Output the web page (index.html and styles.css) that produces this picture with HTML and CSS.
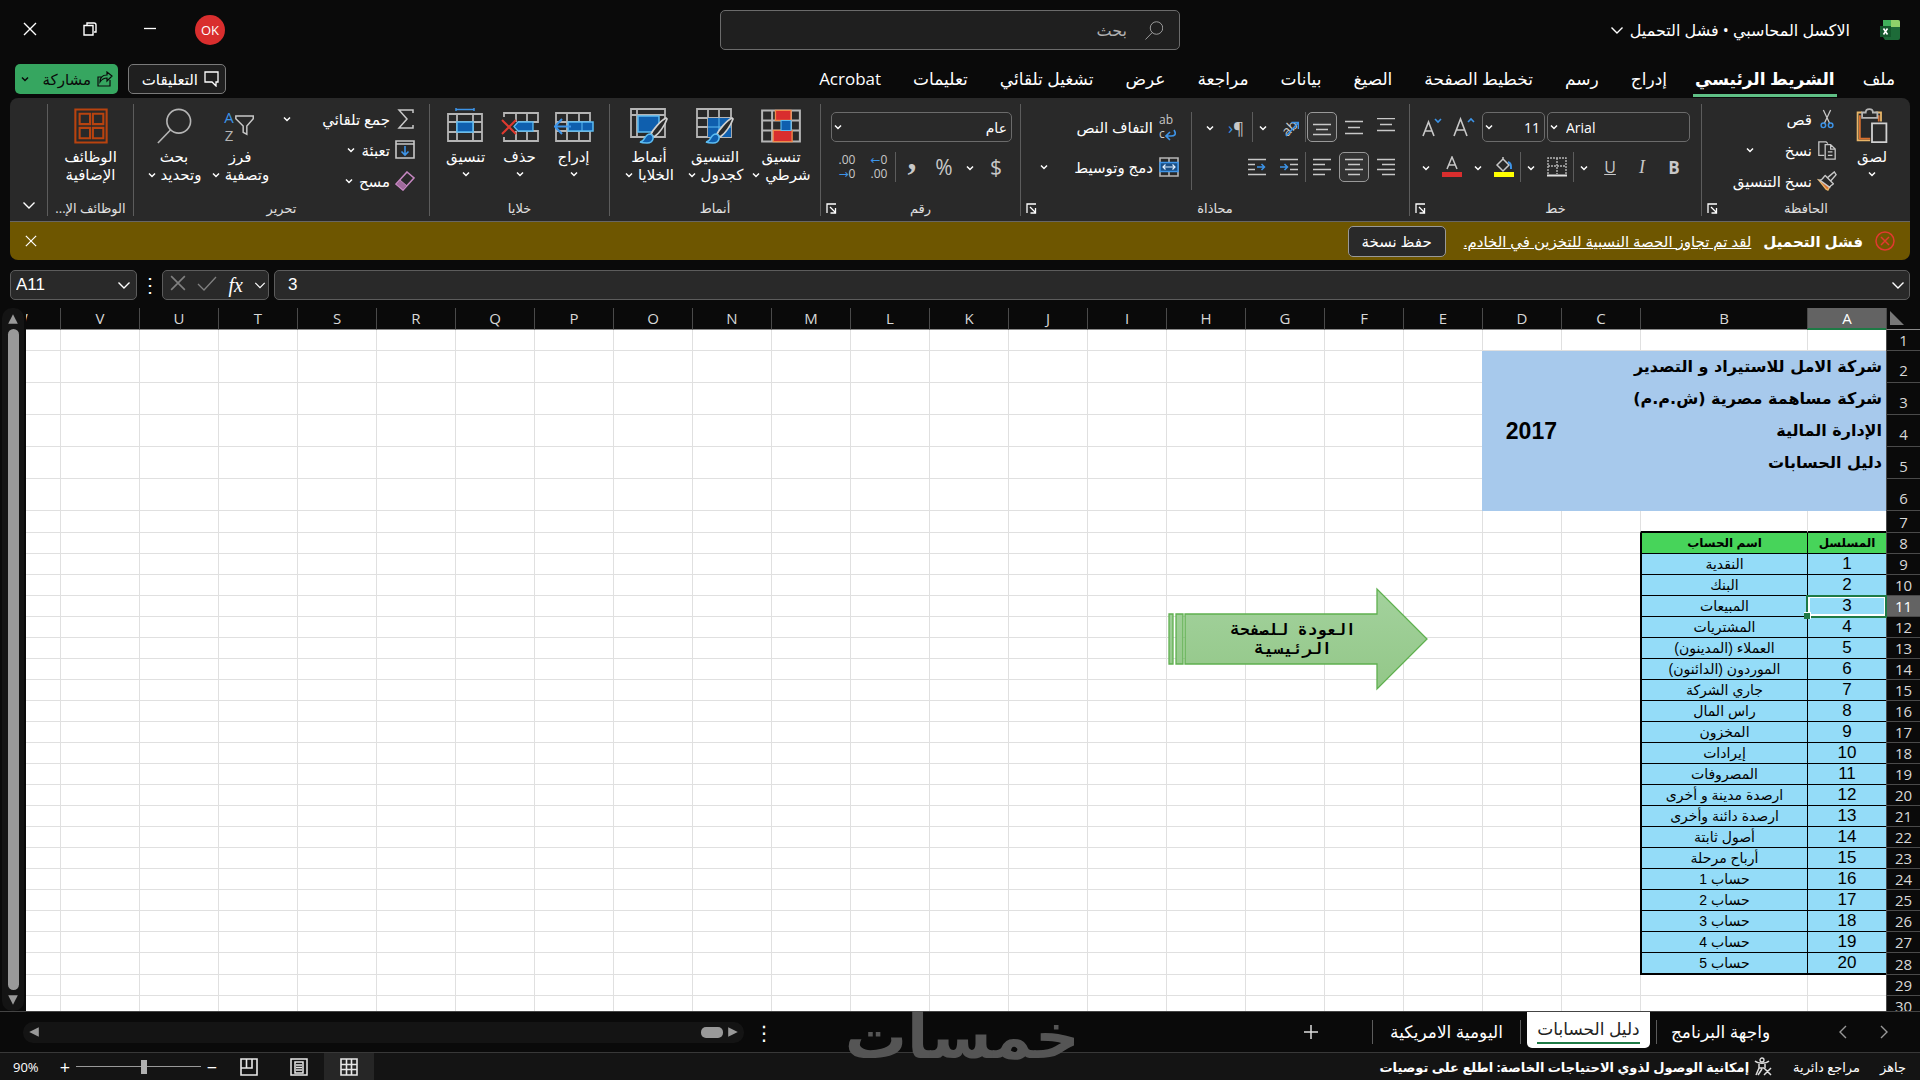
FILE: index.html
```html
<!DOCTYPE html>
<html lang="ar" dir="rtl">

<head>
    <meta charset="UTF-8">
    <meta name="viewport" content="width=device-width, initial-scale=1.0">
    <title>الاكسل المحاسبي</title>
    <link rel="stylesheet" href="styles.css">
</head>

<body>
    <!-- icon set -->
    <svg class="sprite" aria-hidden="true">
        <symbol id="chev" viewBox="0 0 10 10"><path d="M2 3.5l3 3 3-3" fill="none" stroke="currentColor" stroke-width="1.5"/></symbol>
        <symbol id="chev-big" viewBox="0 0 14 14"><path d="M1.500 4.500l5.500 5.500 5.500-5.500" fill="none" stroke="currentColor" stroke-width="1.400"/></symbol>
        <symbol id="close" viewBox="0 0 14 14"><path d="M1 1l12 12M13 1L1 13" fill="none" stroke="currentColor" stroke-width="1.400"/></symbol>
        <symbol id="lens" viewBox="0 0 36 38"><circle cx="23" cy="14" r="12.500" fill="none" stroke="currentColor" stroke-width="1.700"/><path d="M14.500 23L1 37" stroke="currentColor" stroke-width="1.700"/></symbol>
        <symbol id="launch" viewBox="0 0 11 11"><path d="M1 10V1h9M4 4l5.500 5.500M9.500 5v5h-5" fill="none" stroke="currentColor" stroke-width="1.300"/></symbol>
        <symbol id="paste" viewBox="0 0 36 40">
            <path d="M7 5H2v31h14M22 5h6v10" fill="none" stroke="#e8b568" stroke-width="2"/>
            <path d="M4.500 8v26H16M25.500 8v7" fill="none" stroke="#d9702f" stroke-width="2"/>
            <path d="M7 11V5h4c0-5 8-5 8 0h5v6z" fill="#292929" stroke="#b5b5b5" stroke-width="2"/>
            <path d="M18 17h16v21H18z" fill="#292929" stroke="#d0d0d0" stroke-width="2"/>
        </symbol>
        <symbol id="cut" viewBox="0 0 20 22">
            <path d="M6 1l7 15M14 1L7 16" fill="none" stroke="#c8c8c8" stroke-width="1.400"/>
            <circle cx="6" cy="18" r="2.500" fill="none" stroke="#3d94e8" stroke-width="1.600"/><circle cx="14" cy="18" r="2.500" fill="none" stroke="#3d94e8" stroke-width="1.600"/>
        </symbol>
        <symbol id="copy" viewBox="0 0 22 22">
            <path d="M8 17H2V2h8l2 2" fill="none" stroke="#c8c8c8" stroke-width="1.400"/>
            <path d="M9 5h6l5 5v11H9zM15 5v5h5M12 13h5M12 17h5" fill="none" stroke="#c8c8c8" stroke-width="1.400"/>
        </symbol>
        <symbol id="brush" viewBox="0 0 22 22">
            <path d="M2 10l8 10 2 1 3-6z" fill="#d9702f" stroke="#e8b568" stroke-width="1.500"/>
            <path d="M3 10c4 0 5-5 6-5l9 9c0 1-3 1-4 4zM12 7l7-6 2 3-6 7" fill="#292929" stroke="#c8c8c8" stroke-width="1.500"/>
        </symbol>
        <symbol id="font-up" viewBox="0 0 24 24"><path d="M2 21L8.500 4 15 21M4.500 15h8" fill="none" stroke="#c8c8c8" stroke-width="1.600"/><path d="M16 7l3-3 3 3" fill="none" stroke="#3d94e8" stroke-width="1.600"/></symbol>
        <symbol id="font-down" viewBox="0 0 24 24"><path d="M3 21L8.500 7 14 21M5 16h7" fill="none" stroke="#c8c8c8" stroke-width="1.600"/><path d="M15 4l3 3 3-3" fill="none" stroke="#3d94e8" stroke-width="1.600"/></symbol>
        <symbol id="borders" viewBox="0 0 20 20"><path d="M1 17V1h18v16M10 1v16M1 9h18" fill="none" stroke="#b5b5b5" stroke-width="1.400" stroke-dasharray="2 1"/><path d="M0 18.500h20" stroke="#e0e0e0" stroke-width="2"/></symbol>
        <symbol id="fill-color" viewBox="0 0 20 22"><path d="M3 9l6-6 6 6-6 6zM9 3V1" fill="none" stroke="#c8c8c8" stroke-width="1.500"/><path d="M14 6c3 1 3 3 3 7" fill="none" stroke="#3d94e8" stroke-width="2"/><path d="M0 16h20v5H0z" fill="#ffff00"/></symbol>
        <symbol id="font-color" viewBox="0 0 20 22"><path d="M5 13L10 1l5 12M7 9h6" fill="none" stroke="#c8c8c8" stroke-width="1.500"/><path d="M0 16h20v5H0z" fill="#d92e2e"/></symbol>
        <symbol id="v-top" viewBox="0 0 18 18"><path d="M0 .5h18M3 6.500h12M0 12.500h18" stroke="#c8c8c8" stroke-width="1.500"/></symbol>
        <symbol id="v-mid" viewBox="0 0 18 18"><path d="M0 3.500h18M3 9.500h12M0 15.500h18" stroke="#c8c8c8" stroke-width="1.500"/></symbol>
        <symbol id="v-bot" viewBox="0 0 18 18"><path d="M0 6.500h18M3 11.500h12M0 16.500h18" stroke="#c8c8c8" stroke-width="1.500"/></symbol>
        <symbol id="h-right" viewBox="0 0 18 18"><path d="M0 1.500h18M5 6.500h13M0 11.500h18M5 16.500h13" stroke="#c8c8c8" stroke-width="1.500"/></symbol>
        <symbol id="h-center" viewBox="0 0 18 18"><path d="M0 1.500h18M3 6.500h12M0 11.500h18M3 16.500h12" stroke="#c8c8c8" stroke-width="1.500"/></symbol>
        <symbol id="h-left" viewBox="0 0 18 18"><path d="M0 1.500h18M0 6.500h12M0 11.500h18M0 16.500h12" stroke="#c8c8c8" stroke-width="1.500"/></symbol>
        <symbol id="indent-l" viewBox="0 0 18 18"><path d="M0 1.500h18M10 6.500h8M10 11.500h8M0 16.500h18" stroke="#c8c8c8" stroke-width="1.500"/><path d="M0 9h7M4.500 6L7.500 9l-3 3" fill="none" stroke="#3d94e8" stroke-width="1.500"/></symbol>
        <symbol id="indent-r" viewBox="0 0 18 18"><path d="M0 1.500h18M0 6.500h7M0 11.500h7M0 16.500h18" stroke="#c8c8c8" stroke-width="1.500"/><path d="M9 9h7M13.500 6l3 3-3 3" fill="none" stroke="#3d94e8" stroke-width="1.500"/></symbol>
        <symbol id="arrow-ne" viewBox="0 0 20 20"><path d="M7 19L19 6M12.500 5.500H19.500V12" fill="none" stroke="#3d94e8" stroke-width="1.600"/></symbol>
        <symbol id="wrap-arrow" viewBox="0 0 12 12"><path d="M9 1c3 5 0 6-3 6H1M5 3L1 7l4 4" fill="none" stroke="#3d94e8" stroke-width="1.600"/></symbol>
        <symbol id="merge" viewBox="0 0 20 20"><path d="M1 1h18v18H1zM10 1v18" fill="none" stroke="#b5b5b5" stroke-width="1.600"/><path d="M1 5.500h18v9H1z" fill="#1b4f85" stroke="#3d94e8" stroke-width="1.500"/><path d="M4 10h12M6.500 7.500L4 10l2.500 2.500M13.500 7.500L16 10l-2.500 2.500" fill="none" stroke="#e0f0ff" stroke-width="1.200"/></symbol>
        <symbol id="cond" viewBox="0 0 36 30"><path d="M1 1h34v28H1zM1 10h34M1 19h34M10 1v28M27 1v28" fill="none" stroke="#b5b5b5" stroke-width="1.800"/><path d="M13 1h14v9H13zM11 19h17v10H11z" fill="#d92e2e" stroke="#f08a4a" stroke-width="1.200"/><path d="M18 10h9v9h-9z" fill="#0f5fae" stroke="#5cbcf2"/></symbol>
        <symbol id="tbl" viewBox="0 0 38 36"><path d="M1 1h34v28H1zM1 10h34M1 19h34M12 1v28M23 1v28" fill="none" stroke="#b5b5b5" stroke-width="1.800"/><path d="M12 10h23v19H12z" fill="#0f5fae"/><path d="M12 19h23M23 10v19" stroke="#5cbcf2"/><use href="#paint"/></symbol>
        <symbol id="cellst" viewBox="0 0 38 36"><path d="M1 1h34v28H1zM1 7h34M7 1v28" fill="none" stroke="#b5b5b5" stroke-width="1.800"/><path d="M8 8h21v16H8z" fill="#0f5fae" stroke="#5cbcf2" stroke-width="1.500"/><use href="#paint"/></symbol>
        <g id="paint"><path d="M36 10c-6 3-13 12-15 16l3 3c5-3 11-12 13-18z" fill="#292929" stroke="#d0d0d0" stroke-width="1.700"/><path d="M10 34c5 0 4-8 10-8 5 1 4 9-3 9-3 0-5 0-7-1z" fill="#0f5fae" stroke="#5cbcf2" stroke-width="1.600"/></g>
        <symbol id="ins" viewBox="0 0 40 36"><path d="M2 5h34v28H2zM2 14h34M2 23h34M13 5v28M25 5v28" fill="none" stroke="#b5b5b5" stroke-width="1.800"/><path d="M14 14h25v9H14z" fill="#0f5fae" stroke="#5cbcf2" stroke-width="1.500"/><path d="M28 14v9" stroke="#5cbcf2"/><path d="M17 18.500H1M8 11L1 18.500 8 26" fill="none" stroke="#3d94e8" stroke-width="2"/></symbol>
        <symbol id="del" viewBox="0 0 40 36"><path d="M4 9V5h34v9H18M4 29v4h34V23H18M16 5v9M27 5v9M16 23v10M27 23v10" fill="none" stroke="#b5b5b5" stroke-width="1.800"/><path d="M14 18.500l4-4.500h15v9H18z" fill="#0f5fae" stroke="#5cbcf2" stroke-width="1.300"/><path d="M2 12l14 14M16 12L2 26" stroke="#e03a2f" stroke-width="2"/></symbol>
        <symbol id="fmt" viewBox="0 0 40 36"><path d="M2 6h34v27H2zM2 14h34M2 24h34M11 6v27M27 6v27" fill="none" stroke="#b5b5b5" stroke-width="1.800"/><path d="M11 14h16v10H11z" fill="#0f5fae" stroke="#5cbcf2" stroke-width="1.500"/><path d="M10 1.500h18M10 0v3M28 0v3" stroke="#3d94e8" stroke-width="1.500"/></symbol>
        <symbol id="sigma" viewBox="0 0 20 20"><path d="M18 4V1H4l8 9-8 9h14v-3" fill="none" stroke="#c8c8c8" stroke-width="1.500"/></symbol>
        <symbol id="fill-down" viewBox="0 0 20 20"><path d="M1 1h18v17H1zM1 4h18" fill="none" stroke="#c8c8c8" stroke-width="1.600"/><path d="M10 6v9M6.500 11.500L10 15l3.500-3.500" fill="none" stroke="#3d94e8" stroke-width="1.600"/></symbol>
        <symbol id="eraser" viewBox="0 0 20 20"><path d="M12 1l7 6-11 12-7-6z" fill="none" stroke="#c586c0" stroke-width="1.600"/><path d="M5 9l7 6-4 4-7-6z" fill="#a06a9c" stroke="#c586c0"/></symbol>
        <symbol id="funnel" viewBox="0 0 22 24"><path d="M1 1h19v3l-7 8v9l-4-2v-7L1 4z" fill="none" stroke="#c8c8c8" stroke-width="1.600"/></symbol>
        <symbol id="addins" viewBox="0 0 36 38"><path d="M1.500 1.500h33v35h-33zM6 6h11v11H6zM20 6h11v11H20zM6 21h11v11H6zM20 21h11v11H20z" fill="none" stroke="#b8430f" stroke-width="2.200"/></symbol>
        <symbol id="comment" viewBox="0 0 16 16"><path d="M1 1h13v10h-2v4l-4-4H1z" fill="none" stroke="currentColor" stroke-width="1.300"/></symbol>
        <symbol id="share" viewBox="0 0 16 16"><path d="M4 6H1v9h12V9M3 11c0-5 3-7 7-7V1l5 4-5 5V7c-3 0-5 1-7 4z" fill="none" stroke="currentColor" stroke-width="1.200"/></symbol>
        <symbol id="excel" viewBox="0 0 20 20"><path d="M3 0h15a2 2 0 0 1 2 2v16a2 2 0 0 1-2 2H5l-2-3z" fill="#1d6b38"/><path d="M3 0h8v7H3z" fill="#3fb05a"/><path d="M11 0h7a2 2 0 0 1 2 2v5h-9z" fill="#8fd36a"/><path d="M0 6h11v11H0z" fill="#14582c"/><path d="M3.500 8.500l4 6M7.500 8.500l-4 6" stroke="#fff" stroke-width="1.600"/></symbol>
        <symbol id="error" viewBox="0 0 20 20"><circle cx="10" cy="10" r="9" fill="none" stroke="#e03a2f" stroke-width="1.500"/><path d="M6 6l8 8M14 6l-8 8" stroke="#e03a2f" stroke-width="1.500"/></symbol>
        <symbol id="access" viewBox="0 0 20 20"><circle cx="9" cy="3" r="2" fill="none" stroke="#ddd" stroke-width="1.300"/><path d="M2 4c3 3 11 3 14 0M6 7v4l-3 7M12 7v4M6 11h5M9 12l-4 6M11 11l7 7M18 11l-7 7" fill="none" stroke="#ddd" stroke-width="1.500"/></symbol>
    </svg>

    <header class="titlebar">
        <div class="doc">
            <svg class="logo"><use href="#excel"/></svg>
            <button class="doc-name">الاكسل المحاسبي • فشل التحميل <svg class="i14"><use href="#chev-big"/></svg></button>
        </div>
        <label class="search">
            <svg class="search-icon"><use href="#lens"/></svg>
            <input type="text" placeholder="بحث" aria-label="بحث">
        </label>
        <div class="window-btns">
            <button class="avatar">OK</button>
            <button class="win" aria-label="تصغير"><svg class="i14" viewBox="0 0 14 14"><path d="M1 6.500h12" stroke="#fff" stroke-width="1.300"/></svg></button>
            <button class="win" aria-label="استعادة"><svg class="i14" viewBox="0 0 14 14"><path d="M1 3.500h9v9.500H1zM4 3V1h7q2 0 2 2v7h-2" fill="none" stroke="#fff" stroke-width="1.400"/></svg></button>
            <button class="win" aria-label="إغلاق"><svg class="i14"><use href="#close"/></svg></button>
        </div>
    </header>

    <nav class="tabs">
        <a href="#">ملف</a>
        <a href="#" class="active">الشريط الرئيسي</a>
        <a href="#">إدراج</a>
        <a href="#">رسم</a>
        <a href="#">تخطيط الصفحة</a>
        <a href="#">الصيغ</a>
        <a href="#">بيانات</a>
        <a href="#">مراجعة</a>
        <a href="#">عرض</a>
        <a href="#">تشغيل تلقائي</a>
        <a href="#">تعليمات</a>
        <a href="#">Acrobat</a>
        <div class="tab-actions">
            <button class="comments"><svg class="i16"><use href="#comment"/></svg>التعليقات</button>
            <button class="share"><svg class="i16"><use href="#share"/></svg>مشاركة<svg class="i10"><use href="#chev"/></svg></button>
        </div>
    </nav>

    <section class="ribbon">
        <div class="group">
            <div class="group-body clip">
                <button class="big"><svg><use href="#paste"/></svg><span>لصق</span><svg class="i10"><use href="#chev"/></svg></button>
                <div class="list">
                    <button><svg class="i20"><use href="#cut"/></svg>قص</button>
                    <button><svg class="i20"><use href="#copy"/></svg><span class="grow">نسخ</span><svg class="i10"><use href="#chev"/></svg></button>
                    <button><svg class="i20"><use href="#brush"/></svg>نسخ التنسيق</button>
                </div>
            </div>
            <div class="group-name">الحافظة<svg class="launch"><use href="#launch"/></svg></div>
        </div>
        <div class="group">
            <div class="group-body rows font-group">
                <div class="row gap2">
                    <div class="combo font-name"><select aria-label="الخط"><option>Arial</option></select><svg class="i10"><use href="#chev"/></svg></div>
                    <div class="combo font-size"><select aria-label="حجم الخط"><option>11</option></select><svg class="i10"><use href="#chev"/></svg></div>
                    <div class="row">
                        <button class="tool"><svg class="i24"><use href="#font-up"/></svg></button>
                        <button class="tool"><svg class="i24"><use href="#font-down"/></svg></button>
                    </div>
                </div>
                <div class="row">
                    <button class="tool bold">B</button>
                    <button class="tool italic">I</button>
                    <button class="tool underline">U</button>
                    <button class="drop"><svg class="i10"><use href="#chev"/></svg></button>
                    <i class="sep"></i>
                    <button class="tool"><svg class="i20"><use href="#borders"/></svg></button>
                    <button class="drop"><svg class="i10"><use href="#chev"/></svg></button>
                    <i class="sep"></i>
                    <button class="tool"><svg class="i22"><use href="#fill-color"/></svg></button>
                    <button class="drop"><svg class="i10"><use href="#chev"/></svg></button>
                    <button class="tool"><svg class="i22"><use href="#font-color"/></svg></button>
                    <button class="drop"><svg class="i10"><use href="#chev"/></svg></button>
                </div>
            </div>
            <div class="group-name">خط<svg class="launch"><use href="#launch"/></svg></div>
        </div>
        <div class="group">
            <div class="group-body align">
                <div class="rows">
                    <div class="row">
                        <button class="tool"><svg class="i18"><use href="#v-top"/></svg></button>
                        <button class="tool"><svg class="i18"><use href="#v-mid"/></svg></button>
                        <button class="tool on"><svg class="i18"><use href="#v-bot"/></svg></button>
                        <i class="sep"></i>
                        <button class="tool orient"><span>ab</span><svg class="i20"><use href="#arrow-ne"/></svg></button>
                        <button class="drop"><svg class="i10"><use href="#chev"/></svg></button>
                        <i class="sep"></i>
                        <button class="tool rtl" dir="ltr"><b>›</b>¶</button>
                        <button class="drop"><svg class="i10"><use href="#chev"/></svg></button>
                    </div>
                    <div class="row">
                        <button class="tool"><svg class="i18"><use href="#h-right"/></svg></button>
                        <button class="tool on"><svg class="i18"><use href="#h-center"/></svg></button>
                        <button class="tool"><svg class="i18"><use href="#h-left"/></svg></button>
                        <i class="sep"></i>
                        <button class="tool"><svg class="i18"><use href="#indent-l"/></svg></button>
                        <button class="tool"><svg class="i18"><use href="#indent-r"/></svg></button>
                    </div>
                </div>
                <div class="rows wrap-col">
                    <button class="row wide"><span class="wrap-icon" dir="ltr">ab<br>c<svg class="i12"><use href="#wrap-arrow"/></svg></span>التفاف النص</button>
                    <button class="row wide"><svg class="i20"><use href="#merge"/></svg><span class="grow">دمج وتوسيط</span><svg class="i10"><use href="#chev"/></svg></button>
                </div>
            </div>
            <div class="group-name">محاذاة<svg class="launch"><use href="#launch"/></svg></div>
        </div>
        <div class="group">
            <div class="group-body rows num-group">
                <div class="combo num-format"><select aria-label="تنسيق الأرقام"><option>عام</option></select><svg class="i10"><use href="#chev"/></svg></div>
                <div class="row">
                    <button class="tool sign">$</button>
                    <button class="drop"><svg class="i10"><use href="#chev"/></svg></button>
                    <button class="tool sign">%</button>
                    <button class="tool comma">,</button>
                    <i class="sep"></i>
                    <button class="tool dec" dir="ltr"><span><b>←</b>0<br>.00</span></button>
                    <button class="tool dec" dir="ltr"><span>.00<br><b>→</b>0</span></button>
                </div>
            </div>
            <div class="group-name">رقم<svg class="launch"><use href="#launch"/></svg></div>
        </div>
        <div class="group">
            <div class="group-body bigs">
                <button class="big"><svg><use href="#cond"/></svg><span>تنسيق</span><span>شرطي <svg class="i10"><use href="#chev"/></svg></span></button>
                <button class="big"><svg><use href="#tbl"/></svg><span>التنسيق</span><span>كجدول <svg class="i10"><use href="#chev"/></svg></span></button>
                <button class="big"><svg><use href="#cellst"/></svg><span>أنماط</span><span>الخلايا <svg class="i10"><use href="#chev"/></svg></span></button>
            </div>
            <div class="group-name">أنماط</div>
        </div>
        <div class="group">
            <div class="group-body bigs cells">
                <button class="big"><svg><use href="#ins"/></svg><span>إدراج</span><svg class="i10"><use href="#chev"/></svg></button>
                <button class="big"><svg><use href="#del"/></svg><span>حذف</span><svg class="i10"><use href="#chev"/></svg></button>
                <button class="big"><svg><use href="#fmt"/></svg><span>تنسيق</span><svg class="i10"><use href="#chev"/></svg></button>
            </div>
            <div class="group-name">خلايا</div>
        </div>
        <div class="group">
            <div class="group-body edit">
                <div class="list">
                    <button><svg class="i20"><use href="#sigma"/></svg><span class="grow">جمع تلقائي</span><svg class="i10"><use href="#chev"/></svg></button>
                    <button><svg class="i20"><use href="#fill-down"/></svg>تعبئة <svg class="i10"><use href="#chev"/></svg></button>
                    <button><svg class="i20"><use href="#eraser"/></svg>مسح <svg class="i10"><use href="#chev"/></svg></button>
                </div>
                <button class="big"><span class="sort"><svg class="i22"><use href="#funnel"/></svg><span class="az"><b>A</b><i>Z</i></span></span><span>فرز</span><span>وتصفية <svg class="i10"><use href="#chev"/></svg></span></button>
                <button class="big"><svg><use href="#lens"/></svg><span>بحث</span><span>وتحديد <svg class="i10"><use href="#chev"/></svg></span></button>
            </div>
            <div class="group-name">تحرير</div>
        </div>
        <div class="group">
            <div class="group-body">
                <button class="big full"><svg><use href="#addins"/></svg><span>الوظائف</span><span>الإضافية</span></button>
            </div>
            <div class="group-name">الوظائف الإ...</div>
        </div>
        <button class="collapse" aria-label="طي الشريط"><svg class="i14"><use href="#chev-big"/></svg></button>
    </section>

    <div class="notice">
        <svg class="i20"><use href="#error"/></svg>
        <strong>فشل التحميل</strong>
        <a href="#">لقد تم تجاوز الحصة النسبية للتخزين في الخادم.</a>
        <button class="save-copy">حفظ نسخة</button>
        <button class="notice-close" aria-label="إغلاق"><svg class="i12"><use href="#close"/></svg></button>
    </div>

    <div class="formula-bar" dir="ltr">
        <div class="name-box"><input type="text" value="A11" aria-label="مربع الاسم"><svg class="i14"><use href="#chev-big"/></svg></div>
        <span class="dots">⋮</span>
        <div class="fx-box">
            <button aria-label="إلغاء الأمر"><svg class="i16 dim"><use href="#close"/></svg></button>
            <button aria-label="إدخال"><svg class="i20 dim" viewBox="0 0 20 20"><path d="M1 11l6 6L19 4" fill="none" stroke="currentColor" stroke-width="1.300"/></svg></button>
            <button class="fx" aria-label="إدراج دالة">fx</button>
            <svg class="i12"><use href="#chev-big"/></svg>
        </div>
        <div class="formula"><input type="text" value="3" aria-label="شريط الصيغة"><svg class="i14"><use href="#chev-big"/></svg></div>
    </div>

    <main class="workspace">
        <div class="sheet">
            <table id="grid"></table>
            <a href="#" class="back-arrow">
                <svg viewBox="0 0 260 104">
                    <defs><linearGradient id="g" x1="0" y1="0" x2="0" y2="1"><stop offset="0" stop-color="#a3d29d"/><stop offset="1" stop-color="#93c788"/></linearGradient></defs>
                    <path d="M1 27h4v50H1zM8 27h7v50H8zM17 27h192V2l50 50-50 50V77H17z" fill="url(#g)" stroke="#5fb04f" stroke-width="1.300"/>
                </svg>
                <span>العودة للصفحة<br>الرئيسية</span>
            </a>
        </div>
        <div class="vscroll">
            <svg class="i12" viewBox="0 0 10 10"><path d="M5 1l4 8H1z" fill="#999"/></svg>
            <i class="vthumb"></i>
            <svg class="i12" viewBox="0 0 10 10"><path d="M5 9l4-8H1z" fill="#999"/></svg>
        </div>
    </main>

    <div class="sheet-bar">
        <div class="sheet-nav">
            <button aria-label="السابق"><svg class="i14" viewBox="0 0 14 14"><path d="M4 1l6 6-6 6" fill="none" stroke="#999" stroke-width="1.400"/></svg></button>
            <button aria-label="التالي"><svg class="i14" viewBox="0 0 14 14"><path d="M10 1L4 7l6 6" fill="none" stroke="#999" stroke-width="1.400"/></svg></button>
        </div>
        <button class="sheet-tab">واجهة البرنامج</button>
        <button class="sheet-tab current"><span>دليل الحسابات</span></button>
        <button class="sheet-tab last">اليومية الامريكية</button>
        <button class="add" aria-label="ورقة جديدة"><svg class="i14" viewBox="0 0 14 14"><path d="M7 0v14M0 7h14" stroke="#ddd" stroke-width="1.500"/></svg></button>
        <span class="watermark">خمسات</span>
        <span class="dots">⋮</span>
        <div class="hscroll">
            <svg class="i12" viewBox="0 0 10 10"><path d="M9 5L1 1v8z" fill="#999"/></svg>
            <i class="hthumb"></i>
            <svg class="i12 end" viewBox="0 0 10 10"><path d="M1 5l8-4v8z" fill="#999"/></svg>
        </div>
    </div>

    <footer class="status">
        <span>جاهز</span>
        <span class="circular">مراجع دائرية</span>
        <button class="access"><svg class="i20"><use href="#access"/></svg>إمكانية الوصول لذوي الاحتياجات الخاصة: اطلع على توصيات</button>
        <div class="views">
            <button class="on" aria-label="عادي"><svg class="i18" viewBox="0 0 18 18"><path d="M1 1h16v16H1zM6.500 1v16M11.500 1v16M1 6.500h16M1 11.500h16" fill="none" stroke="#e8e8e8" stroke-width="1.600"/></svg></button>
            <button aria-label="تخطيط الصفحة"><svg class="i18" viewBox="0 0 18 18"><path d="M1 1h16v16H1zM5 4h8v11H5zM6 7h6M6 9.500h6M6 12h6" fill="none" stroke="#e8e8e8" stroke-width="1.500"/></svg></button>
            <button aria-label="معاينة فواصل الصفحات"><svg class="i18" viewBox="0 0 18 18"><path d="M1 1h16v16H1zM1 10h11V1M6.500 1v9" fill="none" stroke="#e8e8e8" stroke-width="1.600"/></svg></button>
        </div>
        <div class="zoom">
            <button aria-label="تصغير">−</button>
            <input type="range" min="0" max="100" value="45" aria-label="تكبير/تصغير">
            <button aria-label="تكبير">+</button>
            <span class="percent" dir="ltr">90%</span>
        </div>
    </footer>

    <script src="script.js"></script>
</body>

</html>
```
FILE: styles.css
```css
* {
    box-sizing: border-box;
}

body {
    margin: 0;
    height: 100vh;
    display: flex;
    flex-direction: column;
    overflow: hidden;
    background: #0a0a0a;
    color: #fff;
    font-family: "Open Sans", "DejaVu Sans", sans-serif;
    font-size: 15px;
}

button,
input,
select {
    font: inherit;
    color: inherit;
    background: none;
    border: none;
    padding: 0;
    margin: 0;
}

button {
    cursor: pointer;
    white-space: nowrap;
}

a {
    color: inherit;
    text-decoration: none;
}

svg {
    flex: none;
}

.sprite {
    position: absolute;
    width: 0;
    height: 0;
}

.i10 { width: 10px; height: 10px; }
.i12 { width: 12px; height: 12px; }
.i14 { width: 14px; height: 14px; }
.i16 { width: 16px; height: 16px; }
.i18 { width: 18px; height: 18px; }
.i20 { width: 20px; height: 20px; }
.i22 { width: 22px; height: 22px; }
.i24 { width: 24px; height: 24px; }

/* title bar */
.titlebar {
    flex: none;
    height: 60px;
    display: grid;
    grid-template-columns: 1fr 460px 1fr;
    align-items: center;
    padding-right: 20px;
}

.doc {
    display: flex;
    align-items: center;
    gap: 30px;
}

.logo {
    width: 20px;
    height: 20px;
}

.doc-name {
    display: flex;
    align-items: center;
    gap: 6px;
    font-size: 16px;
}

.search {
    height: 40px;
    display: flex;
    align-items: center;
    gap: 18px;
    padding: 0 16px;
    background: #1f1f1f;
    border: 1px solid #6b6b6b;
    border-radius: 5px;
    color: #b0b0b0;
    font-size: 16px;
}

.search-icon {
    width: 18px;
    height: 19px;
}

.search input {
    flex: 1;
    outline: none;
}

.search input::placeholder {
    color: #b0b0b0;
    opacity: 1;
}

.window-btns {
    display: flex;
    justify-content: flex-end;
    align-items: center;
}

.avatar {
    width: 30px;
    height: 30px;
    margin-left: 15px;
    border-radius: 50%;
    background: #d92e2e;
    font-size: 13px;
}

.win {
    width: 60px;
    height: 40px;
}

/* tabs */
.tabs {
    flex: none;
    height: 38px;
    display: flex;
    align-items: center;
    padding: 0 9px 0 15px;
    font-size: 17px;
}

.tabs a {
    height: 36px;
    padding: 0 16px;
    line-height: 36px;
    white-space: nowrap;
}

.tabs .active {
    margin: 0 10px;
    padding: 0 2px;
    font-weight: bold;
    border-bottom: 3px solid #5fbf85;
}

.tab-actions {
    margin-right: auto;
    display: flex;
    gap: 10px;
    font-size: 15px;
}

.comments,
.share {
    height: 30px;
    display: flex;
    align-items: center;
    gap: 6px;
    border-radius: 5px;
    padding: 0 5px;
}

.comments {
    width: 98px;
    background: #1f1f1f;
    border: 1px solid #7a7a7a;
}

.share {
    width: 103px;
    background: #36a660;
    color: #0a0a0a;
}

.share .i10 {
    margin-right: auto;
}

/* ribbon */
.ribbon {
    flex: none;
    height: 124px;
    margin: 0 10px;
    display: grid;
    grid-template-columns:
        minmax(0, 209fr) minmax(0, 292fr) minmax(0, 389fr) minmax(0, 200fr) minmax(0, 211fr)
        minmax(0, 180fr) minmax(0, 296fr) minmax(0, 86fr) minmax(0, 37fr);
    background: #292929;
    border-bottom: 1px solid #666;
    border-radius: 8px 8px 0 0;
}

.group {
    display: flex;
    flex-direction: column;
    margin: 6px 0;
    border-left: 1px solid #5c5c5c;
}

.group-body {
    height: 96px;
    display: flex;
}

.group-name {
    position: relative;
    height: 16px;
    line-height: 16px;
    text-align: center;
    font-size: 13px;
    white-space: nowrap;
    color: #e0e0e0;
}

.launch {
    position: absolute;
    left: 5px;
    top: 3px;
    width: 11px;
    height: 11px;
    color: #fff;
}

.group-body.rows {
    padding: 8px 10px 0 0;
}

.group-body.font-group {
    padding-right: 11px;
}

.group-body.num-group {
    padding-right: 8px;
}

.rows {
    display: flex;
    flex-direction: column;
    gap: 10px;
}

.row {
    display: flex;
    align-items: center;
    height: 30px;
}

.gap2 {
    gap: 2px;
}

.tool {
    width: 32px;
    height: 30px;
    display: flex;
    align-items: center;
    justify-content: center;
    color: #c8c8c8;
}

.tool.on {
    width: 30px;
    margin: 0 1px;
    border: 1px solid #999;
    border-radius: 5px;
    background: #333;
}

.drop {
    width: 20px;
    height: 30px;
}

.sep {
    width: 1px;
    height: 30px;
    background: #5c5c5c;
}

.bold {
    font-size: 17px;
    font-weight: bold;
}

.italic {
    font: italic 18px "Liberation Serif", serif;
}

.underline {
    font-size: 16px;
    text-decoration: underline;
}

.combo {
    position: relative;
    height: 30px;
}

.combo select {
    width: 100%;
    height: 30px;
    appearance: none;
    border: 1px solid #6b6b6b;
    border-radius: 5px;
    padding: 0 4px 0 18px;
    font-size: 14px;
}

.combo svg {
    position: absolute;
    left: 2px;
    top: 10px;
}

.font-name {
    width: 143px;
}

.font-name select {
    direction: ltr;
}

.font-size {
    width: 63px;
}

.num-format {
    width: 181px;
}

.align {
    padding: 8px 7px 0 0;
}

.orient {
    position: relative;
    font-size: 14px;
}

.orient span {
    transform: rotate(-45deg);
}

.orient svg {
    position: absolute;
}

.rtl {
    font-size: 17px;
}

.rtl b,
.dec b,
.az b {
    color: #3d94e8;
    font-weight: normal;
}

.wrap-col {
    margin-right: 8px;
    padding-right: 12px;
    height: 78px;
    border-right: 1px solid #5c5c5c;
}

.wide {
    width: 144px;
    gap: 6px;
    padding-left: 4px;
}

.wrap-icon {
    width: 20px;
    font-size: 12px;
    line-height: 14px;
    text-align: left;
    color: #c8c8c8;
}

.wrap-icon svg {
    vertical-align: middle;
}

.grow {
    flex: 1;
    text-align: right;
}

.sign {
    font-size: 21px;
}

.comma {
    font: bold 36px/10px "Liberation Serif", serif;
    padding-bottom: 20px;
}

.dec {
    font-size: 12px;
    line-height: 14px;
    text-align: right;
}

.big {
    width: 66px;
    display: flex;
    flex-direction: column;
    align-items: center;
    line-height: 18px;
}

.big > svg:first-child,
.sort {
    width: 40px;
    height: 36px;
    margin: 4px 0 3px;
    color: #b5b5b5;
}

.big .i10 {
    margin: 4px 0;
}

.big span .i10 {
    margin: 0;
}

.sort {
    display: flex;
    align-items: center;
    justify-content: center;
}

.az {
    display: flex;
    flex-direction: column;
    font-size: 15px;
    line-height: 18px;
}

.az i {
    font-style: normal;
}

.full {
    width: 100%;
}

.clip {
    padding-right: 12px;
}

.clip .big {
    width: 52px;
}

.clip .list {
    width: 92px;
    margin-right: 9px;
}

.bigs {
    justify-content: center;
}

.cells .big {
    width: 54px;
}

.list {
    display: flex;
    flex-direction: column;
}

.list button {
    height: 32px;
    margin-top: -1px;
    display: flex;
    align-items: center;
    gap: 5px;
}

.edit {
    padding-right: 14px;
}

.edit .list {
    width: 133px;
    margin-left: 9px;
}

.collapse {
    align-self: end;
    height: 32px;
}

/* upload notice */
.notice {
    flex: none;
    height: 38px;
    margin: 0 10px;
    padding: 0 15px;
    display: flex;
    align-items: center;
    gap: 12px;
    background: #6e5600;
    border-radius: 0 0 8px 8px;
}

.notice a {
    text-decoration: underline;
}

.save-copy {
    width: 98px;
    height: 31px;
    margin-right: 6px;
    border: 1px solid #999;
    border-radius: 5px;
    background: #292929;
}

.notice-close {
    margin-right: auto;
}

/* formula bar */
.formula-bar {
    flex: none;
    height: 30px;
    margin: 10px 10px 8px;
    display: flex;
    align-items: center;
    font-family: "Liberation Sans", sans-serif;
    font-size: 17px;
}

.name-box,
.fx-box,
.formula {
    height: 30px;
    display: flex;
    align-items: center;
    border: 1px solid #5c5c5c;
    border-radius: 5px;
    background: #292929;
}

.name-box {
    width: 127px;
    padding: 0 5px;
}

.name-box input,
.formula input {
    flex: 1;
    width: 0;
    outline: none;
}

.dots {
    width: 25px;
    text-align: center;
    font-size: 20px;
}

.fx-box {
    width: 107px;
    padding: 0 2px 0 7px;
    justify-content: space-between;
}

.dim {
    color: #808080;
}

.fx {
    font: italic 20px "Liberation Serif", serif;
}

.formula {
    flex: 1;
    margin-left: 5px;
    padding: 0 4px 0 13px;
}

/* grid */
.workspace {
    flex: 1;
    min-height: 0;
    display: flex;
    border-bottom: 1px solid #444;
}

.sheet {
    position: relative;
    flex: 1;
    min-width: 0;
    overflow: hidden;
}

#grid {
    width: 1939px;
    table-layout: fixed;
    border-collapse: separate;
    border-spacing: 0;
    background: #fff;
    color: #000;
}

#grid th,
#grid td {
    height: 21px;
    padding: 0;
    line-height: 18px;
    text-align: center;
    white-space: nowrap;
    overflow: hidden;
    border: 0 solid #e0e0e0;
    border-width: 0 0 1px 1px;
}

#grid th {
    background: #0a0a0a;
    color: #d8d8d8;
    border-color: #4a4a4a;
    font-weight: normal;
    font-size: 15px;
}

#grid thead th {
    height: 22px;
    padding-bottom: 2px;
    border-bottom-color: #8a8a8a;
}

#grid tbody th {
    padding-bottom: 1px;
    vertical-align: bottom;
}

#grid th.picked {
    background: #636363;
    color: #fff;
}

#grid thead th.picked {
    padding-bottom: 1px;
    border-bottom: 2px solid #1e7a45;
}

.corner svg {
    display: block;
    margin-right: 16px;
}

#grid .tall th,
#grid .tall td {
    height: 32px;
}

#grid .tall th {
    padding-bottom: 3px;
}

#grid .mid th,
#grid .mid td {
    height: 22px;
}

#grid .banner {
    background: #a7c9ec;
    border: none;
    text-align: right;
    padding: 0 4px;
    font: bold 16px/28px "DejaVu Sans", sans-serif;
}

#grid .year {
    font: bold 23px/28px "Liberation Sans", sans-serif;
}

#grid .acc {
    background: #94dcf8;
    border-color: #000;
    font-family: "Liberation Sans", "DejaVu Sans", sans-serif;
    font-size: 14px;
}

#grid .acc.num {
    font-size: 17px;
}

#grid .acc.name {
    border-left-width: 2px;
}

#grid .acc.head {
    background: #47d45a;
    font-size: 12px;
    font-weight: bold;
}

#grid .acc.final {
    border-bottom-width: 2px;
}

#grid .above {
    border-bottom: 2px solid #000;
}

#grid .acc.selected {
    position: relative;
    z-index: 1;
    overflow: visible;
    outline: 2px solid #1e7a45;
    outline-offset: -1px;
    box-shadow: inset 0 0 0 2px #fff;
}

/* fill handle */
#grid .selected::after {
    content: "";
    position: absolute;
    left: -4px;
    bottom: -3px;
    width: 6px;
    height: 6px;
    background: #1e7a45;
    border: 0 solid #fff;
    border-width: 1px 1px 0 0;
}

/* shape floating over the cells */
.back-arrow {
    position: absolute;
    top: 279px;
    right: 492px;
    width: 260px;
    height: 104px;
    display: flex;
    align-items: center;
    justify-content: center;
    padding-right: 10px;
    color: #000;
    font: bold 16px/19px "DejaVu Sans Mono", monospace;
    text-align: center;
}

.back-arrow svg {
    position: absolute;
    inset: 0;
}

.back-arrow span {
    position: relative;
}

.vscroll {
    width: 22px;
    margin: 0 2px;
    padding: 5px 0;
    display: flex;
    flex-direction: column;
    align-items: center;
    gap: 4px;
    background: #141414;
    border-radius: 10px;
}

.vthumb {
    flex: 1;
    width: 11px;
    border-radius: 6px;
    background: #999;
}

/* sheet tabs */
.sheet-bar {
    position: relative;
    flex: none;
    height: 40px;
    display: flex;
    align-items: center;
    font-size: 17px;
}

.sheet-nav {
    width: 136px;
    padding-right: 29px;
    display: flex;
    gap: 27px;
}

.sheet-tab {
    width: 128px;
    height: 24px;
    line-height: 24px;
    border-left: 1px solid #5c5c5c;
}

.sheet-tab.current {
    width: 123px;
    height: 36px;
    margin: 0 6px 4px;
    padding: 0 10px;
    background: #fff;
    color: #222;
    border: none;
    border-radius: 0 0 5px 5px;
}

.current span {
    display: block;
    line-height: 26px;
    border-bottom: 2px solid #1e7a45;
}

.sheet-tab.last {
    width: 149px;
    border-right: 1px solid #5c5c5c;
}

.add {
    margin-right: 54px;
}

.watermark {
    position: absolute;
    left: 44%;
    top: 0;
    line-height: 44px;
    font-size: 62px;
    font-weight: bold;
    color: #555;
}

.sheet-bar .dots {
    margin-right: auto;
    width: 40px;
}

.hscroll {
    width: 721px;
    height: 21px;
    margin-left: 23px;
    padding: 0 5px;
    display: flex;
    align-items: center;
    gap: 4px;
    background: #141414;
    border-radius: 10px;
}

.hthumb {
    width: 22px;
    height: 11px;
    border-radius: 5px;
    background: #999;
}

.end {
    margin-right: auto;
}

/* status bar */
.status {
    flex: none;
    height: 28px;
    display: flex;
    align-items: center;
    padding: 0 14px 0 13px;
    background: #141414;
    border-top: 1px solid #383838;
    font-size: 13px;
}

.circular {
    margin: 0 20px;
}

.access {
    display: flex;
    align-items: center;
    gap: 4px;
    font-weight: bold;
}

.views {
    margin-right: auto;
    margin-left: 6px;
    display: flex;
}

.views button {
    width: 50px;
    height: 27px;
    display: flex;
    align-items: center;
    justify-content: center;
}

.views .on {
    background: #262626;
}

.zoom {
    display: flex;
    align-items: center;
    gap: 5px;
}

.zoom button {
    width: 12px;
    font-size: 18px;
    line-height: 20px;
}

.zoom input {
    width: 125px;
    height: 14px;
    appearance: none;
    background: linear-gradient(#999, #999) center / 100% 1px no-repeat;
}

.zoom input::-webkit-slider-thumb {
    appearance: none;
    width: 6px;
    height: 14px;
    background: #b0b0b0;
}

.percent {
    width: 41px;
}
```
FILE: script.js
```js
const columns = 'ABCDEFGHIJKLMNOPQRSTUVW'.split('');

const banner = {
    2: 'شركة الامل للاستيراد و التصدير',
    3: 'شركة مساهمة مصرية (ش.م.م)',
    4: 'الإدارة المالية',
    5: 'دليل الحسابات',
    6: ''
};

const accounts = [
    'النقدية', 'البنك', 'المبيعات', 'المشتريات', 'العملاء (المدينون)',
    'الموردون (الدائنون)', 'جاري الشركة', 'راس المال', 'المخزون', 'إيرادات',
    'المصروفات', 'ارصدة مدينة و أخرى', 'ارصدة دائنة وأخرى', 'أصول ثابتة',
    'أرباح مرحلة', 'حساب 1', 'حساب 2', 'حساب 3', 'حساب 4', 'حساب 5'
];

// columns A and B (or the whole banner A:D) of one row
function leadingCells(r) {
    if (r in banner) {
        return `<td class="banner" colspan="3">${banner[r]}</td><td class="banner year">${r === 4 ? '2017' : ''}</td>`;
    }
    if (r === 8) {
        return '<td class="acc head">المسلسل</td><td class="acc name head">اسم الحساب</td>';
    }
    if (r > 8 && r < 29) {
        const end = r === 28 ? ' final' : '';
        const sel = r === 11 ? ' selected' : '';
        return `<td class="acc num${end}${sel}">${r - 8}</td><td class="acc name${end}">${accounts[r - 9]}</td>`;
    }
    const cls = r === 7 ? ' class="above"' : '';
    return `<td${cls}></td><td${cls}></td>`;
}

function buildGrid() {
    let html = '<colgroup><col style="width:34px"><col style="width:79px"><col style="width:167px">';
    html += '<col style="width:79px">'.repeat(columns.length - 2) + '</colgroup>';

    html += '<thead><tr><th class="corner"><svg width="14" height="14" viewBox="0 0 14 14"><path d="M0 0l14 14H0z" fill="#777"/></svg></th>';
    html += columns.map(c => `<th${c === 'A' ? ' class="picked"' : ''}>${c}</th>`).join('');
    html += '</tr></thead><tbody>';

    for (let r = 1; r <= 30; r++) {
        const size = r in banner ? 'tall' : (r === 7 || r === 28 ? 'mid' : '');
        const used = r in banner ? 4 : 2;
        html += `<tr class="${size}"><th${r === 11 ? ' class="picked"' : ''}>${r}</th>`;
        html += leadingCells(r) + '<td></td>'.repeat(columns.length - used) + '</tr>';
    }
    document.getElementById('grid').innerHTML = html + '</tbody>';
}

buildGrid();
```
